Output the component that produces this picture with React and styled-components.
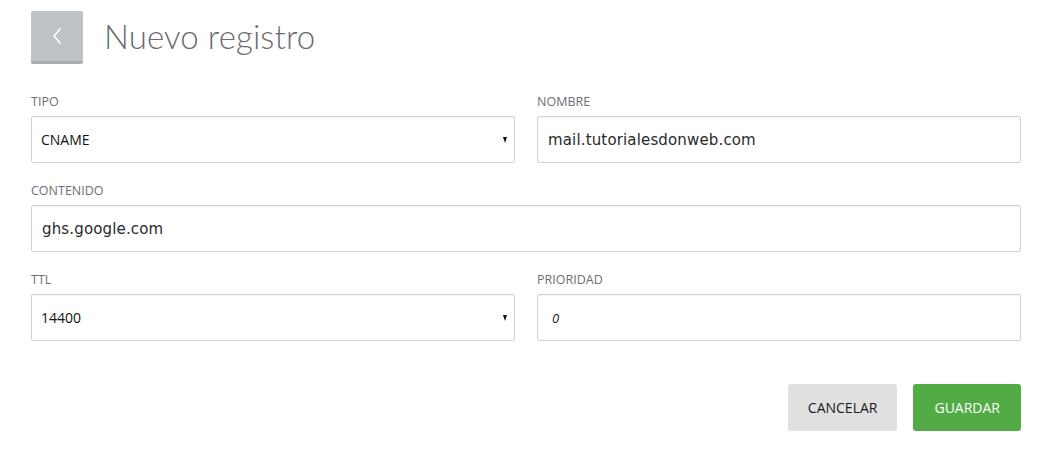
import React from "react";
import styled, { createGlobalStyle } from "styled-components";

const GlobalStyle = createGlobalStyle`
  body {
    margin: 0;
    background: #ffffff;
    font-family: "Open Sans", sans-serif;
  }
`;

const Page = styled.div`
  width: 990px;
  padding: 11px 0 0 31px;
`;

const Header = styled.div`
  display: flex;
  align-items: center;
  gap: 21px;
  margin-bottom: 29px;
`;

const BackButton = styled.button`
  width: 52px;
  height: 53px;
  border: none;
  border-bottom: 3px solid #a9adb0;
  border-radius: 2px;
  background: #bfc3c6;
  display: flex;
  align-items: center;
  justify-content: center;
  padding: 0;
  cursor: pointer;
`;

const Title = styled.h1`
  margin: 0 0 4px;
  font-family: "Lato", sans-serif;
  font-weight: 300;
  font-size: 33px;
  color: #6b6b73;
  letter-spacing: 0.1px;
`;

const Grid = styled.div`
  display: grid;
  grid-template-columns: 484px 484px;
  column-gap: 22px;
  row-gap: 19px;
`;

const Field = styled.div`
  display: flex;
  flex-direction: column;
  grid-column: ${(p) => (p.$wide ? "1 / span 2" : "auto")};
`;

const Label = styled.label`
  font-size: 12.5px;
  color: #6e6e74;
  text-transform: uppercase;
  line-height: 17px;
  margin-bottom: 6px;
`;

const Box = styled.div`
  height: 47px;
  border: 1px solid #d2d2d2;
  border-radius: 2px;
  box-shadow: inset 0 1px 1px rgba(0, 0, 0, 0.04);
  display: flex;
  align-items: center;
  justify-content: space-between;
  padding: 0 7px 0 ${(p) => p.$pad || 9}px;
  box-sizing: border-box;
  background: #fff;
`;

const SelectText = styled.span`
  font-family: "Open Sans", sans-serif;
  font-size: 14px;
  color: #111;
`;

const InputText = styled.span`
  font-family: "DejaVu Sans", sans-serif;
  font-size: 15px;
  color: #2a2a2a;
  letter-spacing: 0.15px;
  padding-left: 1px;
`;

const Placeholder = styled.span`
  font-family: "Open Sans", sans-serif;
  font-style: italic;
  font-size: 13px;
  color: #222;
`;

const Arrow = styled.span`
  width: 0;
  height: 0;
  border-left: 2.5px solid transparent;
  border-right: 2.5px solid transparent;
  border-top: 6px solid #111;
`;

const Actions = styled.div`
  display: flex;
  justify-content: flex-end;
  gap: 16px;
  margin-top: 43px;
`;

const Button = styled.button`
  height: 47px;
  padding: 0 ${(p) => (p.$primary ? 21 : 20)}px;
  border: none;
  border-radius: 3px;
  font-family: "Open Sans", sans-serif;
  font-size: 14px;
  text-transform: uppercase;
  cursor: pointer;
  background: ${(p) => (p.$primary ? "#52ab45" : "#e0e0e0")};
  color: ${(p) => (p.$primary ? "#ffffff" : "#1a1a1a")};
`;

function Chevron() {
  return (
    <svg width="10" height="18" viewBox="0 0 10 18" fill="none">
      <path d="M8.5 1.5 L2 9 L8.5 16.5" stroke="#ffffff" strokeWidth="1.6" />
    </svg>
  );
}

export default function App() {
  return (
    <Page>
      <GlobalStyle />
      <Header>
        <BackButton aria-label="Volver">
          <Chevron />
        </BackButton>
        <Title>Nuevo registro</Title>
      </Header>
      <Grid>
        <Field>
          <Label>Tipo</Label>
          <Box>
            <SelectText>CNAME</SelectText>
            <Arrow />
          </Box>
        </Field>
        <Field>
          <Label>Nombre</Label>
          <Box>
            <InputText>mail.tutorialesdonweb.com</InputText>
          </Box>
        </Field>
        <Field $wide>
          <Label>Contenido</Label>
          <Box>
            <InputText>ghs.google.com</InputText>
          </Box>
        </Field>
        <Field>
          <Label>TTL</Label>
          <Box>
            <SelectText>14400</SelectText>
            <Arrow />
          </Box>
        </Field>
        <Field>
          <Label>Prioridad</Label>
          <Box $pad={14}>
            <Placeholder>0</Placeholder>
          </Box>
        </Field>
      </Grid>
      <Actions>
        <Button>Cancelar</Button>
        <Button $primary>Guardar</Button>
      </Actions>
    </Page>
  );
}
